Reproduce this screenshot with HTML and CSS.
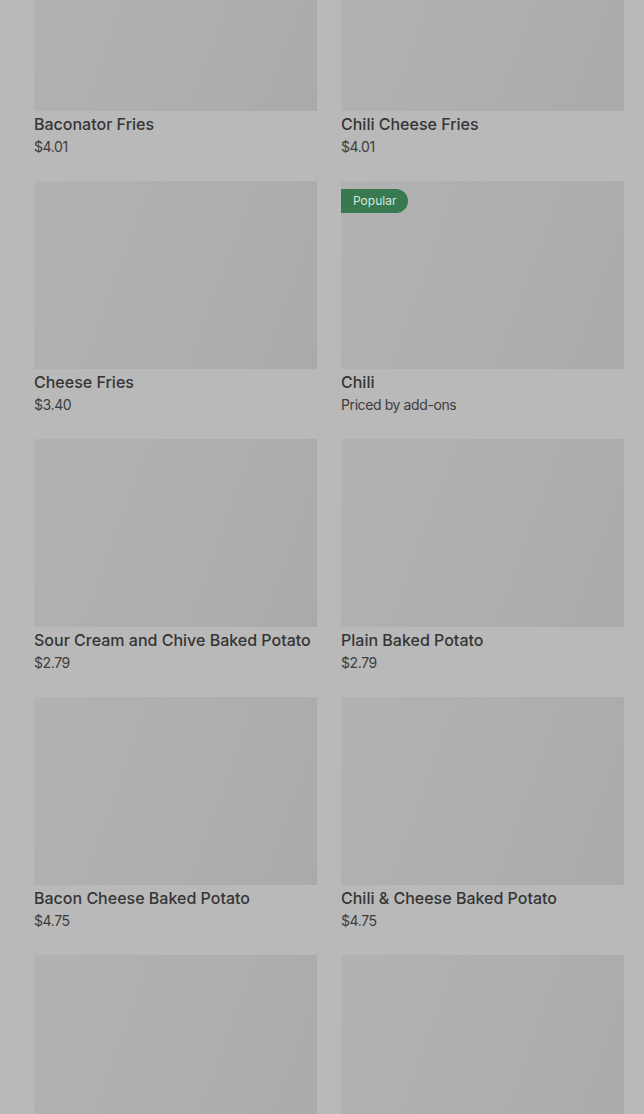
FILE: index.html
```html
<!DOCTYPE html>
<html lang="en">
<head>
    <meta charset="UTF-8">
    <meta name="viewport" content="width=device-width, initial-scale=1.0">
    <title>Menu</title>
    <link rel="stylesheet" href="styles.css">
</head>
<body>
    <div class="menu">
        <div class="item">
            <div class="photo"></div>
            <div class="name">Baconator Fries</div>
            <div class="price">$4.01</div>
        </div>
        <div class="item">
            <div class="photo"></div>
            <div class="name">Chili Cheese Fries</div>
            <div class="price">$4.01</div>
        </div>

        <div class="item">
            <div class="photo"></div>
            <div class="name">Cheese Fries</div>
            <div class="price">$3.40</div>
        </div>
        <div class="item">
            <div class="photo">
                <span class="badge">Popular</span>
            </div>
            <div class="name">Chili</div>
            <div class="price">Priced by add-ons</div>
        </div>

        <div class="item">
            <div class="photo"></div>
            <div class="name">Sour Cream and Chive Baked Potato</div>
            <div class="price">$2.79</div>
        </div>
        <div class="item">
            <div class="photo"></div>
            <div class="name">Plain Baked Potato</div>
            <div class="price">$2.79</div>
        </div>

        <div class="item">
            <div class="photo"></div>
            <div class="name">Bacon Cheese Baked Potato</div>
            <div class="price">$4.75</div>
        </div>
        <div class="item">
            <div class="photo"></div>
            <div class="name">Chili &amp; Cheese Baked Potato</div>
            <div class="price">$4.75</div>
        </div>

        <div class="item">
            <div class="photo"></div>
        </div>
        <div class="item">
            <div class="photo"></div>
        </div>
    </div>
</body>
</html>
```

FILE: styles.css
```css
body {
    margin: 0;
    font-family: Inter, Roboto, "Liberation Sans", sans-serif;
    background-color: #b9b9b9;
    overflow: hidden;
    height: 1114px;
}
.menu {
    display: grid;
    grid-template-columns: 283px 283px;
    column-gap: 24px;
    row-gap: 24px;
    padding: 0 20px 0 34px;
    margin-top: -77px;
}
.item {
    display: flex;
    flex-direction: column;
}
.photo {
    position: relative;
    height: 188px;
    background: linear-gradient(110deg, #b2b2b2 0%, #aeaeae 60%, #aaaaaa 100%);
}
.name {
    margin-top: 1px;
    font-size: 16px;
    line-height: 24px;
    font-weight: 500;
    color: #353535;
}
.price {
    margin-top: 1px;
    font-size: 14px;
    line-height: 20px;
    color: #3d3d3d;
    letter-spacing: -0.4px;
}
.badge {
    position: absolute;
    top: 8px;
    left: 0;
    padding: 0 12px;
    height: 24px;
    line-height: 24px;
    font-size: 12px;
    color: #d6e6db;
    background: #377a52;
    border-radius: 0 12px 12px 0;
}
```
